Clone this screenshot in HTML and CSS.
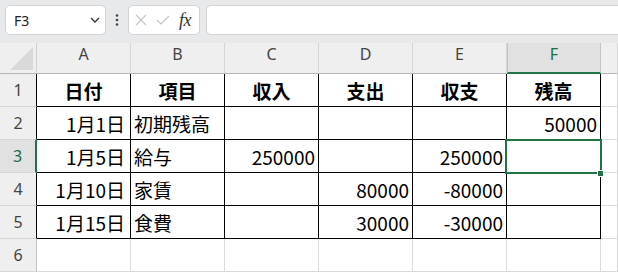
FILE: index.html
```html
<!DOCTYPE html>
<html lang="ja">
<head>
    <meta charset="UTF-8">
    <title>Sheet1</title>
    <link rel="stylesheet" href="styles.css">
</head>
<body>
    <!-- name box + formula bar -->
    <div class="toolbar">
        <div class="nameBox">
            <span>F3</span>
            <svg width="10" height="6" viewBox="0 0 10 6"><path d="M1 1 L5 5 L9 1" fill="none" stroke="#333" stroke-width="1.3"/></svg>
        </div>
        <div class="kebab">
            <svg width="4" height="12" viewBox="0 0 4 12"><circle cx="2" cy="1.5" r="1.3" fill="#444"/><circle cx="2" cy="6" r="1.3" fill="#444"/><circle cx="2" cy="10.5" r="1.3" fill="#444"/></svg>
        </div>
        <div class="fxBox">
            <svg class="cancelIcon" width="12" height="12" viewBox="0 0 12 12"><path d="M1 1 L11 11 M11 1 L1 11" stroke="#c4c4c4" stroke-width="1.1"/></svg>
            <svg class="enterIcon" width="14" height="10" viewBox="0 0 14 10"><path d="M1 5 L5 9 L13 1" fill="none" stroke="#c4c4c4" stroke-width="1.1"/></svg>
            <span class="fx">fx</span>
        </div>
        <div class="formula"></div>
    </div>

    <div class="sheet">
        <div class="corner"><div class="cornerTri"></div></div>
        <div class="colHead">A</div>
        <div class="colHead">B</div>
        <div class="colHead">C</div>
        <div class="colHead">D</div>
        <div class="colHead">E</div>
        <div class="colHead active">F</div>
        <div class="colHead"></div>

        <div class="rowHead edge">1</div>
        <div class="cell tbl th">日付</div>
        <div class="cell tbl th">項目</div>
        <div class="cell tbl th">収入</div>
        <div class="cell tbl th">支出</div>
        <div class="cell tbl th">収支</div>
        <div class="cell tbl th">残高</div>
        <div class="cell"></div>

        <div class="rowHead edge">2</div>
        <div class="cell tbl date">1月1日</div>
        <div class="cell tbl txt">初期残高</div>
        <div class="cell tbl"></div>
        <div class="cell tbl"></div>
        <div class="cell tbl"></div>
        <div class="cell tbl num">50000</div>
        <div class="cell"></div>

        <div class="rowHead active">3</div>
        <div class="cell tbl date">1月5日</div>
        <div class="cell tbl txt">給与</div>
        <div class="cell tbl num">250000</div>
        <div class="cell tbl"></div>
        <div class="cell tbl num">250000</div>
        <div class="cell tbl"></div>
        <div class="cell"></div>

        <div class="rowHead edge">4</div>
        <div class="cell tbl date">1月10日</div>
        <div class="cell tbl txt">家賃</div>
        <div class="cell tbl"></div>
        <div class="cell tbl num">80000</div>
        <div class="cell tbl num">-80000</div>
        <div class="cell tbl"></div>
        <div class="cell"></div>

        <div class="rowHead edge">5</div>
        <div class="cell tbl date">1月15日</div>
        <div class="cell tbl txt">食費</div>
        <div class="cell tbl"></div>
        <div class="cell tbl num">30000</div>
        <div class="cell tbl num">-30000</div>
        <div class="cell tbl"></div>
        <div class="cell"></div>

        <div class="rowHead">6</div>
        <div class="cell"></div>
        <div class="cell"></div>
        <div class="cell"></div>
        <div class="cell"></div>
        <div class="cell"></div>
        <div class="cell"></div>
        <div class="cell"></div>

        <!-- active cell F3 -->
        <div class="selection"></div>
        <div class="fillHandle"></div>
    </div>
</body>
</html>
```

FILE: styles.css
```css
body {
    margin: 0;
    background-color: #ffffff;
    font-family: "Noto Sans", "Open Sans", sans-serif;
    overflow: hidden;
}

.toolbar {
    height: 43px;
    box-sizing: border-box;
    padding: 5px 0 0 5px;
    display: flex;
    align-items: flex-start;
    background-color: #e8e9eb;
}
.nameBox {
    width: 101px;
    height: 30px;
    box-sizing: border-box;
    display: flex;
    align-items: center;
    justify-content: space-between;
    padding: 0 5px 0 8px;
    background-color: #ffffff;
    border: 1px solid #d3d3d3;
    border-radius: 5px;
    font-size: 14px;
    color: #222;
}
.kebab {
    width: 22px;
    height: 30px;
    display: flex;
    align-items: center;
    justify-content: center;
}
.fxBox {
    width: 72px;
    height: 30px;
    box-sizing: border-box;
    display: flex;
    align-items: center;
    padding-left: 6px;
    background-color: #ffffff;
    border: 1px solid #d3d3d3;
    border-radius: 5px;
}
.cancelIcon {
    margin-right: 9px;
}
.enterIcon {
    margin-right: 9px;
}
.fx {
    font-family: "Liberation Serif", serif;
    font-style: italic;
    font-size: 18px;
    color: #333;
    letter-spacing: -0.5px;
}
.formula {
    flex: 1;
    height: 30px;
    margin-left: 6px;
    margin-right: -10px;
    box-sizing: border-box;
    background-color: #ffffff;
    border: 1px solid #d3d3d3;
    border-radius: 5px;
}

.sheet {
    position: relative;
    display: grid;
    grid-template-columns: 37px repeat(6, 94px) 1fr;
    grid-template-rows: 31px repeat(6, 33px);
}
.sheet > div {
    box-sizing: border-box;
}

.corner {
    position: relative;
    background-color: #efefef;
    border-right: 1px solid #cfcfcf;
    border-bottom: 1px solid #b5b5b5;
}
.cornerTri {
    position: absolute;
    right: 3px;
    bottom: 3px;
    width: 23px;
    height: 23px;
    background-color: #d9d9d9;
    clip-path: polygon(100% 0, 100% 100%, 0 100%);
}
.colHead {
    display: flex;
    align-items: center;
    justify-content: center;
    padding-bottom: 8px;
    background-color: #efefef;
    border-right: 1px solid #d6d6d6;
    border-bottom: 1px solid #b5b5b5;
    font-size: 16px;
    color: #444;
}
.colHead.active {
    background-color: #e1e1e1;
    border-right-color: #c4c4c4;
    border-left: 1px solid #c4c4c4;
    border-bottom: 2px solid #217346;
    padding-bottom: 7px;
    color: #1d6b3f;
}
.rowHead {
    display: flex;
    align-items: center;
    justify-content: center;
    background-color: #efefef;
    border-right: 1px solid #c4c4c4;
    border-bottom: 1px solid #d6d6d6;
    font-size: 16px;
    color: #444;
}
.rowHead.edge {
    border-right-color: #000;
}
.rowHead.active {
    background-color: #e1e1e1;
    border-right: 2px solid #217346;
    color: #1d6b3f;
}

.cell {
    display: flex;
    align-items: center;
    background-color: #ffffff;
    border-right: 1px solid #dadada;
    border-bottom: 1px solid #dadada;
    font-family: "Noto Sans CJK JP", sans-serif;
    font-size: 19px;
    color: #000;
    white-space: nowrap;
}
.tbl {
    border-right-color: #000;
    border-bottom-color: #000;
}
.th {
    justify-content: center;
    font-weight: bold;
}
.txt {
    padding-left: 3px;
}
.num {
    justify-content: flex-end;
    padding-right: 3px;
}
.date {
    justify-content: flex-end;
    padding-right: 5px;
}

.selection {
    position: absolute;
    left: 505px;
    top: 96px;
    width: 97px;
    height: 35px;
    border: 2px solid #217346;
}
.fillHandle {
    position: absolute;
    left: 597px;
    top: 127px;
    width: 7px;
    height: 7px;
    background-color: #217346;
    border: 1px solid #ffffff;
}
```
